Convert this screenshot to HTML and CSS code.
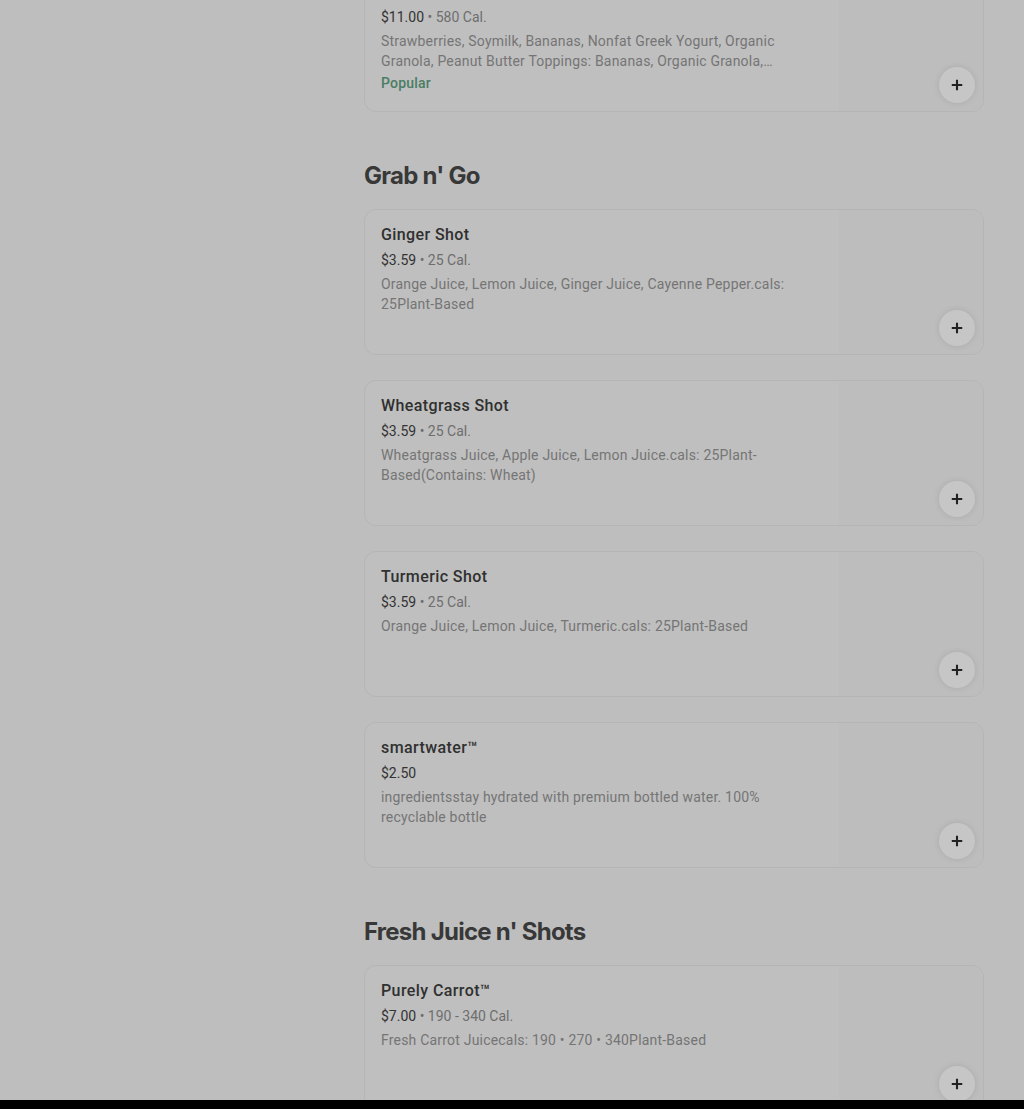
FILE: index.html
```html
<!DOCTYPE html>
<html lang="en">
<head>
<meta charset="utf-8">
<title>Menu</title>
<link rel="stylesheet" href="styles.css">
</head>
<body>
<div class="page">
  <aside class="side"></aside>
  <main class="menu">
    <section class="section first">
      <div class="list">
        <div class="card">
          <div class="info">
            <div class="name">Peanut Butter Acai Bowl</div>
            <div class="meta"><span class="price">$11.00</span> • 580 Cal.</div>
            <div class="desc">Strawberries, Soymilk, Bananas, Nonfat Greek Yogurt, Organic Granola, Peanut Butter Toppings: Bananas, Organic Granola, Peanut Butter</div>
            <div class="tag">Popular</div>
          </div>
          <div class="thumb"><button class="add" aria-label="Add"><svg viewBox="0 0 16 16" width="14" height="14"><path d="M8 2v12M2 8h12" stroke="#222" stroke-width="2.4" fill="none"/></svg></button></div>
        </div>
      </div>
    </section>

    <section class="section">
      <h2 class="heading">Grab n' Go</h2>
      <div class="list">
        <div class="card">
          <div class="info">
            <div class="name">Ginger Shot</div>
            <div class="meta"><span class="price">$3.59</span> • 25 Cal.</div>
            <div class="desc">Orange Juice, Lemon Juice, Ginger Juice, Cayenne Pepper.cals: 25Plant-Based</div>
          </div>
          <div class="thumb"><button class="add" aria-label="Add"><svg viewBox="0 0 16 16" width="14" height="14"><path d="M8 2v12M2 8h12" stroke="#222" stroke-width="2.4" fill="none"/></svg></button></div>
        </div>
        <div class="card">
          <div class="info">
            <div class="name">Wheatgrass Shot</div>
            <div class="meta"><span class="price">$3.59</span> • 25 Cal.</div>
            <div class="desc">Wheatgrass Juice, Apple Juice, Lemon Juice.cals: 25Plant-Based(Contains: Wheat)</div>
          </div>
          <div class="thumb"><button class="add" aria-label="Add"><svg viewBox="0 0 16 16" width="14" height="14"><path d="M8 2v12M2 8h12" stroke="#222" stroke-width="2.4" fill="none"/></svg></button></div>
        </div>
        <div class="card">
          <div class="info">
            <div class="name">Turmeric Shot</div>
            <div class="meta"><span class="price">$3.59</span> • 25 Cal.</div>
            <div class="desc">Orange Juice, Lemon Juice, Turmeric.cals: 25Plant-Based</div>
          </div>
          <div class="thumb"><button class="add" aria-label="Add"><svg viewBox="0 0 16 16" width="14" height="14"><path d="M8 2v12M2 8h12" stroke="#222" stroke-width="2.4" fill="none"/></svg></button></div>
        </div>
        <div class="card">
          <div class="info">
            <div class="name">smartwater™</div>
            <div class="meta"><span class="price">$2.50</span></div>
            <div class="desc">ingredientsstay hydrated with premium bottled water. 100% recyclable bottle</div>
          </div>
          <div class="thumb"><button class="add" aria-label="Add"><svg viewBox="0 0 16 16" width="14" height="14"><path d="M8 2v12M2 8h12" stroke="#222" stroke-width="2.4" fill="none"/></svg></button></div>
        </div>
      </div>
    </section>

    <section class="section">
      <h2 class="heading">Fresh Juice n' Shots</h2>
      <div class="list">
        <div class="card">
          <div class="info">
            <div class="name">Purely Carrot™</div>
            <div class="meta"><span class="price">$7.00</span> • 190 - 340 Cal.</div>
            <div class="desc">Fresh Carrot Juicecals: 190 • 270 • 340Plant-Based</div>
          </div>
          <div class="thumb"><button class="add" aria-label="Add"><svg viewBox="0 0 16 16" width="14" height="14"><path d="M8 2v12M2 8h12" stroke="#222" stroke-width="2.4" fill="none"/></svg></button></div>
        </div>
      </div>
    </section>
  </main>
</div>
</body>
</html>
```

FILE: styles.css
```css
html {
  background: #000;
  height: 100%;
}
body {
  margin: 0;
  height: 1100px;
  overflow: hidden;
  background: #bebebe;
  font-family: Roboto, "Noto Sans", sans-serif;
  -webkit-font-smoothing: antialiased;
}
.page {
  display: grid;
  grid-template-columns: 364px 620px;
}
.menu {
  display: flex;
  flex-direction: column;
}
.section.first {
  margin-top: -34px;
}
.section + .section {
  margin-top: 48px;
}
.heading {
  margin: 0 0 17px;
  font-family: Inter, "Noto Sans", sans-serif;
  font-size: 24px;
  line-height: 32px;
  font-weight: 700;
  color: #383838;
  letter-spacing: -0.75px;
}
.list {
  display: flex;
  flex-direction: column;
  gap: 25px;
}
.card {
  display: flex;
  border: 1px solid #b5b5b5;
  border-radius: 12px;
  background: #bfbfbf;
  overflow: hidden;
  height: 144px;
}
.info {
  flex: 1;
  padding: 15px 16px 0 16px;
  min-width: 0;
}
.name {
  font-size: 16px;
  line-height: 20px;
  font-weight: 500;
  color: #303030;
  letter-spacing: 0.4px;
}
.meta {
  margin-top: 5px;
  font-size: 14px;
  line-height: 20px;
  color: #6e6e6e;
}
.price {
  color: #333;
}
.desc {
  margin-top: 4px;
  font-size: 14px;
  line-height: 20px;
  color: #757575;
  letter-spacing: 0.2px;
  max-width: 406px;
  display: -webkit-box;
  -webkit-line-clamp: 2;
  -webkit-box-orient: vertical;
  overflow: hidden;
}
.tag {
  margin-top: 2px;
  font-size: 14px;
  line-height: 20px;
  font-weight: 500;
  color: #4a7d63;
  letter-spacing: 0.2px;
}
.thumb {
  width: 144px;
  flex: none;
  position: relative;
  background: #bdbdbd;
}
.add {
  position: absolute;
  right: 8px;
  bottom: 8px;
  width: 36px;
  height: 36px;
  border: none;
  border-radius: 50%;
  background: #c6c6c6;
  box-shadow: 0 0 6px rgba(0, 0, 0, 0.1);
  display: flex;
  align-items: center;
  justify-content: center;
  padding: 0;
}
```
